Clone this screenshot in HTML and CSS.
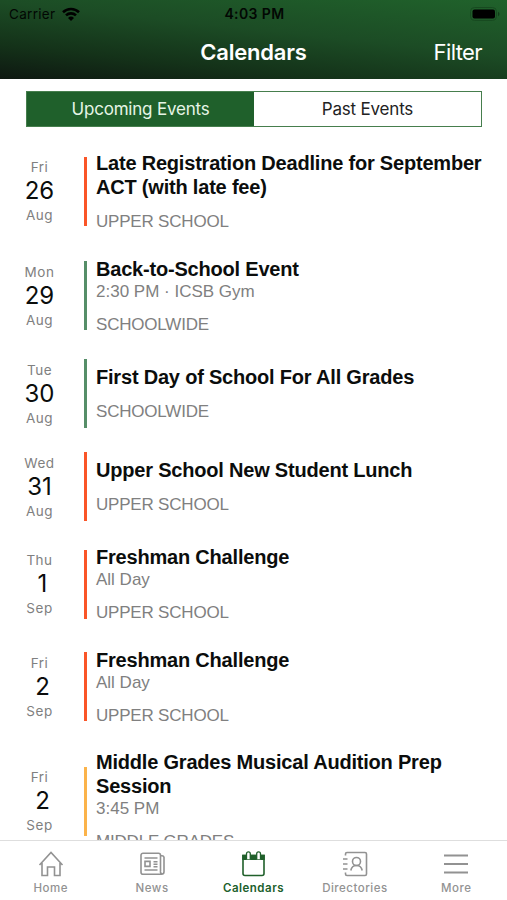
FILE: index.html
```html
<!DOCTYPE html>
<html lang="en">
  <head>
    <meta charset="UTF-8" />
    <meta name="viewport" content="width=device-width, initial-scale=1" />
    <title>Calendars</title>
    <link rel="stylesheet" href="styles.css">
  </head>
  <body>
    <header class="header">
      <div class="status-bar">
        <div class="carrier">
          <span>Carrier</span>
          <svg class="wifi" viewBox="0 0 18 14" fill="none" stroke="#000" stroke-width="2.6">
            <path d="M1 5.2a11.5 11.5 0 0 1 16 0M4 8.4a7.2 7.2 0 0 1 10 0" />
            <path d="M9 14 6 10.9a4.4 4.4 0 0 1 6 0z" fill="#000" stroke="none" />
          </svg>
        </div>
        <span class="time">4:03 PM</span>
        <svg class="battery" viewBox="0 0 31 14">
          <rect x="1.500" y="0.5" width="26" height="13" rx="4" fill="none" stroke="#174a20" />
          <rect x="3.500" y="2.5" width="22.500" height="9" rx="2" />
          <path d="M29 4.8c2 .8 2 3.6 0 4.4z" fill="#123c1a" />
        </svg>
      </div>
      <div class="nav-bar">
        <h1>Calendars</h1>
        <a class="filter">Filter</a>
      </div>
    </header>

    <main class="content">
      <div class="segments">
        <button class="segment active">Upcoming Events</button>
        <button class="segment">Past Events</button>
      </div>

      <section class="events">
        <article class="event two-line">
          <div class="date"><span>Fri</span><b>26</b><span>Aug</span></div>
          <div class="bar upper"></div>
          <div class="details">
            <h2>Late Registration Deadline for September ACT (with late fee)</h2>
            <p class="category">UPPER SCHOOL</p>
          </div>
        </article>

        <article class="event timed">
          <div class="date"><span>Mon</span><b>29</b><span>Aug</span></div>
          <div class="bar schoolwide"></div>
          <div class="details">
            <h2>Back-to-School Event</h2>
            <p>2:30 PM · ICSB Gym</p>
            <p class="category">SCHOOLWIDE</p>
          </div>
        </article>

        <article class="event">
          <div class="date"><span>Tue</span><b>30</b><span>Aug</span></div>
          <div class="bar schoolwide"></div>
          <div class="details">
            <h2>First Day of School For All Grades</h2>
            <p class="category">SCHOOLWIDE</p>
          </div>
        </article>

        <article class="event">
          <div class="date"><span>Wed</span><b>31</b><span>Aug</span></div>
          <div class="bar upper"></div>
          <div class="details">
            <h2>Upper School New Student Lunch</h2>
            <p class="category">UPPER SCHOOL</p>
          </div>
        </article>

        <article class="event timed">
          <div class="date"><span>Thu</span><b class="single">1</b><span>Sep</span></div>
          <div class="bar upper"></div>
          <div class="details">
            <h2>Freshman Challenge</h2>
            <p>All Day</p>
            <p class="category">UPPER SCHOOL</p>
          </div>
        </article>

        <article class="event timed">
          <div class="date"><span>Fri</span><b class="single">2</b><span>Sep</span></div>
          <div class="bar upper"></div>
          <div class="details">
            <h2>Freshman Challenge</h2>
            <p>All Day</p>
            <p class="category">UPPER SCHOOL</p>
          </div>
        </article>

        <article class="event timed two-line">
          <div class="date"><span>Fri</span><b class="single">2</b><span>Sep</span></div>
          <div class="bar middle"></div>
          <div class="details">
            <h2>Middle Grades Musical Audition Prep Session</h2>
            <p>3:45 PM</p>
            <p class="category">MIDDLE GRADES</p>
          </div>
        </article>
      </section>
    </main>

    <nav class="tabs">
      <a class="tab">
        <svg viewBox="0 0 26 26">
          <path d="M1.500 14 13 1.500 24.500 14M4 12v12.500h5.500v-8.500h7v8.500H22V12" />
        </svg>
        <span>Home</span>
      </a>
      <a class="tab">
        <svg viewBox="0 0 26 26">
          <path d="M21.500 20.500V4.200a2 2 0 0 0-2-2H4a2 2 0 0 0-2 2v17a2 2 0 0 0 2 2h18.500a2.500 2.500 0 0 0 2.500-2.500V6.300a2 2 0 0 0-2-1.500h-1.500M21.500 20.500a2 2 0 0 0 1.500 2.400" />
          <path d="M5.500 7h13M14.500 10.700h4M14.500 13.200h4M14.500 15.700h4M5.500 19h13M6 10.400h5v5H6z" />
        </svg>
        <span>News</span>
      </a>
      <a class="tab active">
        <svg viewBox="0 0 26 26">
          <path d="M3 4.500h21V22.500a2 2 0 0 1-2 2H5a2 2 0 0 1-2-2z" />
          <path d="M3 4.500h21v3.700H3z" fill="currentColor" />
          <path class="ring" d="M6.500 8.200V2.800a1.900 1.900 0 0 1 3.800 0v5.400M16.700 8.200V2.800a1.900 1.900 0 0 1 3.800 0v5.400" />
        </svg>
        <span>Calendars</span>
      </a>
      <a class="tab">
        <svg viewBox="0 0 26 26">
          <path d="M3.500 4.500V3A1.500 1.500 0 0 1 5 1.500h18A1.500 1.500 0 0 1 24.500 3v20a1.500 1.500 0 0 1-1.500 1.500H5A1.500 1.500 0 0 1 3.500 23v-1.500M1 8h4.500M1 13h4.500M1 18h4.500" />
          <path d="M8.800 19.500c.6-3.300 2.700-5 5.700-5s5.100 1.700 5.700 5" />
          <circle cx="14.500" cy="10.500" r="4" />
        </svg>
        <span>Directories</span>
      </a>
      <a class="tab">
        <svg viewBox="0 0 26 26">
          <path d="M1 4.500h24M1 13h24M1 21.500h24" stroke-width="2" />
        </svg>
        <span>More</span>
      </a>
    </nav>
  </body>
</html>
```

FILE: styles.css
```css
* {
  box-sizing: border-box;
}

body {
  font-family: Inter, "Liberation Sans", sans-serif;
  background: #fff;
  color: #0b0d0c;
  display: flex;
  flex-direction: column;
  height: 900px;
  margin: 0;
  overflow: hidden;
}

h1,
h2,
p {
  margin: 0;
}

.header {
  height: 79px;
  flex: none;
  background: linear-gradient(186deg, #20622b 0%, #1c4c25 42%, #143219 74%, #0e1811 100%);
}

.status-bar,
.nav-bar {
  display: grid;
  grid-template-columns: 1fr auto 1fr;
  align-items: center;
}

.status-bar {
  height: 27px;
  padding: 0 7px 0 9px;
  color: #020703;
}

.carrier {
  display: flex;
  align-items: center;
  gap: 7px;
  font-size: 13.5px;
  letter-spacing: 0.3px;
}

.wifi {
  width: 18px;
  height: 14px;
}

.time {
  font-size: 14px;
  font-weight: 600;
  letter-spacing: 0.4px;
}

.battery {
  width: 31px;
  height: 14px;
  justify-self: end;
}

.nav-bar {
  height: 49px;
  padding-right: 25px;
  padding-left: 25px;
  color: #fff;
}

h1 {
  grid-column: 2;
  font-size: 22px;
  font-weight: 600;
  letter-spacing: -0.2px;
}

.filter {
  justify-self: end;
  padding-top: 1px;
  font-size: 22px;
  letter-spacing: -0.6px;
}

.content {
  flex: 1;
  min-height: 0;
  overflow: hidden;
  padding-top: 12px;
}

.segments {
  display: flex;
  height: 36px;
  margin: 0 25px 0 26px;
  border: 1px solid #467e4d;
}

.segment {
  flex: 1;
  padding: 0;
  border: 0;
  background: #fff;
  color: #222;
  font-family: inherit;
  font-size: 17px;
  letter-spacing: -0.2px;
}

.segment.active {
  background: #1f602b;
  color: #e6f5e6;
}

.events {
  padding-top: 11px;
}

.event {
  display: grid;
  grid-template-columns: 79px 3px 1fr;
  column-gap: 5px;
  align-items: center;
  height: 93px;
}

.event.timed {
  height: 102.5px;
}

.event.two-line {
  height: 106.5px;
}

.event.timed.two-line {
  height: 126.5px;
}

.date {
  display: flex;
  flex-direction: column;
  align-items: center;
  color: #808080;
  font-size: 13.5px;
  line-height: 20px;
  letter-spacing: 0.5px;
}

.date b {
  color: #0b0d0c;
  font-size: 24px;
  font-weight: 400;
  line-height: 28px;
  letter-spacing: 0;
}

/* single digits line up closer to the units column */
.date .single {
  padding-left: 6px;
}

.bar {
  height: 69px;
}

.details {
  padding-left: 4px;
  color: #808080;
  font-family: "Liberation Sans", Arial, sans-serif;
  font-size: 17px;
  line-height: 21px;
}

h2 {
  color: #0b0d0c;
  font-family: "Liberation Sans", Arial, sans-serif;
  font-size: 20px;
  line-height: 24px;
  letter-spacing: -0.2px;
}

.category {
  margin-top: 12px;
  letter-spacing: -0.2px;
}

.upper {
  background: #fa5528;
}

.schoolwide {
  background: #568e68;
}

.middle {
  background: #fbb34a;
}

.tabs {
  display: grid;
  grid-template-columns: repeat(5, 1fr);
  height: 60px;
  flex: none;
  border-top: 1px solid #dedede;
  background: #fff;
}

.tab {
  display: flex;
  flex-direction: column;
  align-items: center;
  gap: 4px;
  padding-top: 10px;
  color: #929292;
  font-size: 11.5px;
  font-weight: 500;
  letter-spacing: 0.5px;
}

.tab svg {
  width: 26px;
  height: 26px;
  fill: none;
  stroke: currentColor;
  stroke-width: 1.6;
}

.tab.active {
  color: #20602b;
  font-weight: 600;
}

.tab .ring {
  fill: #fff;
  stroke-width: 1.3;
}
```
